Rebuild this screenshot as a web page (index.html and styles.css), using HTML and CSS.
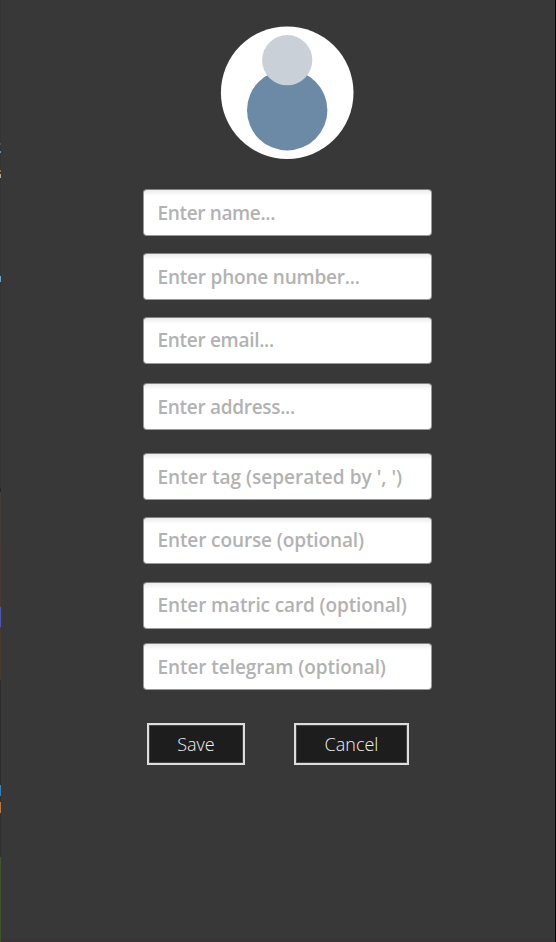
FILE: index.html
```html
<!DOCTYPE html>
<html lang="en">
<head>
<meta charset="utf-8">
<title>Add contact</title>
<link rel="stylesheet" href="styles.css">
</head>
<body>
<main class="window">
  <form class="form">
    <svg class="avatar" viewBox="0 0 134 134" aria-hidden="true">
      <circle cx="67.2" cy="66.7" r="66.3" fill="#fff"/>
      <circle cx="67.2" cy="84.2" r="40.2" fill="#6c8aa6"/>
      <circle cx="67.2" cy="34.2" r="25.1" fill="#c9d0d8"/>
    </svg>
    <div class="fields">
      <input class="field name" type="text" placeholder="Enter name...">
      <input class="field phone" type="text" placeholder="Enter phone number...">
      <input class="field email" type="text" placeholder="Enter email...">
      <input class="field address" type="text" placeholder="Enter address...">
      <input class="field tag" type="text" placeholder="Enter tag (seperated by ', ')">
      <input class="field course" type="text" placeholder="Enter course (optional)">
      <input class="field matric" type="text" placeholder="Enter matric card (optional)">
      <input class="field telegram" type="text" placeholder="Enter telegram (optional)">
    </div>
    <div class="actions">
      <button class="button save" type="button">Save</button>
      <button class="button cancel" type="button">Cancel</button>
    </div>
  </form>
</main>
</body>
</html>
```
FILE: styles.css
```css
* { box-sizing: border-box; }
body { margin: 0; background: #383838; font-family: "Open Sans", "Noto Sans", sans-serif; }

.window {
  display: grid;
  grid-template-columns: 1px 554px 1px;
  height: 942px;
  overflow: hidden;
}
.window::before {
  content: "";
  background: linear-gradient(#343434 0 143px, #505050 143px 145px, #343434 145px 151px, #5795bc 151px 153px, #343434 153px 170px, #a7652f 170px 172px, #343434 172px 174px, #a5ad8d 174px 178px, #343434 178px 276px, #6ca2c8 276px 282px, #343434 282px 488px, #242424 488px 492px, #463e36 492px 545px, #4b3933 545px 607px, #5257a8 607px 627px, #493a30 627px 680px, #302c2c 680px 785px, #407cb4 785px 796px, #303030 796px 802px, #b17a48 802px 813px, #303030 813px 857px, #40542b 857px);
}
.window::after { content: ""; background: #050505; }

.form { display: flex; flex-direction: column; border-bottom: 3px solid #3b3437; }
.avatar { width: 134px; height: 134px; margin: 26px 0 0 219px; }
.fields { display: flex; flex-direction: column; margin: 29px 0 0 142px; }

.field {
  width: 289px;
  height: 47px;
  margin: 0;
  padding: 0 13.5px 0;
  border: 1px solid #9a9a9a;
  border-top-color: #858585;
  border-radius: 4px;
  background: linear-gradient(#ececec, #fff 6px);
  font: 600 19px/26px "Open Sans", "Noto Sans", sans-serif;
  letter-spacing: -0.3px;
  color: #333;
  outline: 0;
}
.field::placeholder { color: #b2b2b2; opacity: 1; }
.name { letter-spacing: -0.35px; }
.phone { margin-top: 17px; letter-spacing: -0.2px; }
.email { margin-top: 17px; }
.address { margin-top: 19px; }
.tag { margin-top: 23px; letter-spacing: 0.02px; }
.course { margin-top: 17px; letter-spacing: -0.11px; }
.matric { margin-top: 18px; letter-spacing: -0.12px; }
.telegram { margin-top: 14px; letter-spacing: -0.07px; }
.email, .course, .matric { padding-bottom: 2px; }

.actions { display: flex; gap: 49px; margin: 33px 0 0 146px; }
.button {
  height: 42px;
  padding: 0 0 1px;
  border: 2px solid #dedede;
  outline: 1px solid #80808066;
  outline-offset: -3px;
  background: #1d1d1d;
  color: #f0f0f0;
  font: 300 18px/24px "Open Sans", "Noto Sans", sans-serif;
}
.save { width: 98px; }
.cancel { width: 115px; }
```
